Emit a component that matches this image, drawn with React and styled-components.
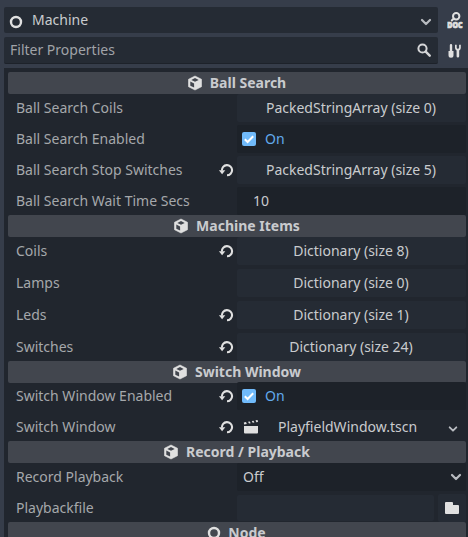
import React from "react";
import styled, { createGlobalStyle } from "styled-components";

const GlobalStyle = createGlobalStyle`
  * { box-sizing: border-box; }
  html, body { margin: 0; background: #363d4a; overflow: hidden; }
  body { font: 14px/20px "Noto Sans", sans-serif; color: #c9cbce; }
  svg { display: block; flex: none; }
`;

const Inspector = styled.div`
  display: flex;
  flex-direction: column;
  width: 468px;
  height: 537px;
  padding: 7px 0 0 4px;
  overflow: hidden;
  background: #363d4a;
`;

const ToolRow = styled.div`
  display: grid;
  flex: none;
  grid-template-columns: 434px 30px;
  height: ${(p) => p.$height}px;
  margin-bottom: 4px;
`;

const Field = styled.div`
  display: flex;
  align-items: center;
  justify-content: space-between;
  padding: 0 ${(p) => p.$end}px 0 ${(p) => p.$start}px;
  border-radius: 2px;
  background: #252b34;
  color: ${(p) => (p.$muted ? "#a0a3a8" : "#c9cbce")};
  border-bottom: ${(p) => (p.$muted ? "1px solid #1d222a" : "0")};

  > svg { margin-top: ${(p) => (p.$muted ? 0 : 3)}px; }
`;

const FieldLabel = styled.span`
  display: flex;
  align-items: center;
  gap: 9px;
  white-space: nowrap;

  > svg { margin-top: 3px; }
`;

const ToolButton = styled.div`
  display: flex;
  align-items: center;
  padding-left: 9px;
`;

const Panel = styled.div`
  flex: none;
  height: 480px;
  padding: 4px 2px 0 4px;
  background: #21262e;
`;

const SectionHeader = styled.div`
  display: flex;
  align-items: center;
  justify-content: center;
  gap: 7px;
  height: 22px;
  padding-right: 1px;
  border-radius: 2px;
  background: #42464e;
  font-weight: 700;
  white-space: nowrap;
`;

const Rows = styled.div`
  display: grid;
  grid-auto-rows: 28px;
  row-gap: ${(p) => p.$gap}px;
  margin-top: ${(p) => p.$shift || 0}px;
`;

const Row = styled.div`
  display: grid;
  grid-template-columns: 210px 19px 1fr;
  align-items: center;
`;

const Label = styled.div`
  padding-left: 8px;
  color: #a5a8ab;
  white-space: nowrap;
`;

const ValueBox = styled.div`
  display: flex;
  align-items: center;
  height: 28px;
  border-radius: 2px;
  white-space: nowrap;
  background: ${(p) => (p.$dark ? "#1d2229" : "#252b34")};
`;

const ButtonValue = styled(ValueBox)`
  justify-content: center;
  padding-right: 1px;
`;

const CheckValue = styled(ValueBox)`
  gap: 9px;
  padding-left: 5px;
  color: #62aaec;
`;

const NumberValue = styled(ValueBox)`
  padding-left: 16px;
`;

const SelectValue = styled(ValueBox)`
  justify-content: space-between;
  padding: 0 4px 0 6px;
`;

const ResourceValue = styled(ValueBox)`
  background: transparent;
  padding: 0 8px 0 6px;

  > svg:last-child { margin-top: 3px; }
`;

const ResourceName = styled.span`
  flex: 1;
  padding-left: 19px;
`;

const FileValue = styled.div`
  display: grid;
  grid-template-columns: 197px 28px;
  column-gap: 4px;
`;

const FileInput = styled(ValueBox)`
  height: 26px;
  align-self: center;
`;

const FileButton = styled(ValueBox)`
  justify-content: center;
`;

const NodeIcon = () => (
  <svg width="14" height="14" viewBox="0 0 14 14">
    <circle cx="7" cy="7" r="5" fill="none" stroke="#e0e0e0" strokeWidth="2.4" />
  </svg>
);

const CubeIcon = () => (
  <svg width="16" height="16" viewBox="0 0 16 16">
    <path d="M8 1 14.5 4.3V11.7L8 15 1.5 11.7V4.3Z" fill="#e0e0e0" strokeLinejoin="round" stroke="#e0e0e0" strokeWidth=".6" />
    <path d="M8 3 11.7 4.9 8 6.8 4.3 4.9Z" fill="#42464e" />
    <path d="M3.3 6.6 7.1 8.6V12.6L3.3 10.7Z" fill="#42464e" />
  </svg>
);

const Chevron = ({ size = 12 }) => (
  <svg width={size} height={size} viewBox="0 0 12 12">
    <path d="M2 4 6 8 10 4" fill="none" stroke="#b9bcc1" strokeWidth="2.2" strokeLinecap="round" strokeLinejoin="round" />
  </svg>
);

const SearchIcon = () => (
  <svg width="14" height="14" viewBox="0 0 14 14">
    <circle cx="5.5" cy="5.5" r="4.1" fill="none" stroke="#d5d6d8" strokeWidth="2" />
    <path d="M8.7 8.7 12.7 12.7" stroke="#d5d6d8" strokeWidth="2.4" strokeLinecap="round" />
  </svg>
);

const DocIcon = () => (
  <svg width="16" height="17" viewBox="0 0 16 17">
    <circle cx="9.2" cy="4.2" r="3.2" fill="none" stroke="#e0e0e0" strokeWidth="2" />
    <path d="M6.8 6.5 4.8 8.5" stroke="#e0e0e0" strokeWidth="2" strokeLinecap="round" />
    <text x="0.3" y="16.2" textLength="15.2" lengthAdjust="spacingAndGlyphs" fill="#e0e0e0" stroke="#e0e0e0" strokeWidth=".7" fontFamily="Noto Sans, sans-serif" fontSize="7.8" fontWeight="900">DOC</text>
  </svg>
);

const ToolsIcon = () => (
  <svg width="16" height="16" viewBox="0 0 16 16" fill="#e0e0e0">
    <path d="M2.8 2.2a1.2 1.2 0 0 1 2.4 0V8H6.5v4.2a2.5 2.5 0 0 1-5 0V8h1.3Z" />
    <path d="M8 1.8v3.1a3 3 0 0 0 1.6 2.5v5.8a1.2 1.2 0 0 0 2.6 0V7.4a3 3 0 0 0 1.6-2.5V1.8h-1.7v3.1l-1.2 1-1.2-1V1.8Z" />
  </svg>
);

const RevertIcon = () => (
  <svg width="17" height="16" viewBox="0 0 17 16">
    <path d="M3.9 8.6A5.1 5.1 0 1 1 9 13.3" fill="none" stroke="#e0e0e0" strokeWidth="2.1" />
    <path d="M.9 8.3H7.3L4.1 12.2Z" fill="#e0e0e0" />
  </svg>
);

const CheckIcon = () => (
  <svg width="14" height="14" viewBox="0 0 14 14">
    <rect width="14" height="14" rx="2" fill="#70bafa" />
    <path d="M2.8 7.2 5.6 10 11.2 4.2" fill="none" stroke="#fff" strokeWidth="2" />
  </svg>
);

const SceneIcon = () => (
  <svg width="16" height="16" viewBox="0 0 16 16" fill="#e0e0e0">
    <path d="M1 7h14v6.5a1 1 0 0 1-1 1H2a1 1 0 0 1-1-1Z" />
    <path d="M.8 3.6 3 3.1 3.8 5 1.2 5.6ZM5 2.7 6.8 2.4 7.7 4.2 6 4.6ZM8.8 2 10.5 1.7 11.4 3.5 9.7 3.8ZM12.5 1.3 14.6 1 15 2.9 13.3 3.2Z" />
  </svg>
);

const FolderIcon = () => (
  <svg width="14" height="12" viewBox="0 0 14 12" fill="#e0e0e0">
    <path d="M0 1a1 1 0 0 1 1-1H7a1 1 0 0 1 1 1V3H13a1 1 0 0 1 1 1V11a1 1 0 0 1-1 1H1a1 1 0 0 1-1-1Z" />
  </svg>
);

const Property = ({ name, changed, children }) => (
  <Row>
    <Label>{name}</Label>
    <div>{changed && <RevertIcon />}</div>
    {children}
  </Row>
);

const On = () => (
  <CheckValue $dark>
    <CheckIcon />
    On
  </CheckValue>
);

const items = [
  { name: "Coils", size: 8, changed: true },
  { name: "Lamps", size: 0 },
  { name: "Leds", size: 1, changed: true },
  { name: "Switches", size: 24, changed: true },
];

export default function App() {
  return (
    <>
      <GlobalStyle />
      <Inspector>
        <ToolRow $height={26}>
          <Field $start={5} $end={6}>
            <FieldLabel><NodeIcon />Machine</FieldLabel>
            <Chevron />
          </Field>
          <ToolButton><DocIcon /></ToolButton>
        </ToolRow>
        <ToolRow $height={27}>
          <Field $muted $start={6} $end={7}>
            <FieldLabel>Filter Properties</FieldLabel>
            <SearchIcon />
          </Field>
          <ToolButton><ToolsIcon /></ToolButton>
        </ToolRow>
        <Panel>
          <SectionHeader><CubeIcon />Ball Search</SectionHeader>
          <Rows $gap={3}>
            <Property name="Ball Search Coils">
              <ButtonValue>PackedStringArray (size 0)</ButtonValue>
            </Property>
            <Property name="Ball Search Enabled"><On /></Property>
            <Property name="Ball Search Stop Switches" changed>
              <ButtonValue>PackedStringArray (size 5)</ButtonValue>
            </Property>
            <Property name="Ball Search Wait Time Secs">
              <NumberValue $dark>10</NumberValue>
            </Property>
          </Rows>
          <SectionHeader><CubeIcon />Machine Items</SectionHeader>
          <Rows $gap={4}>
            {items.map((item) => (
              <Property key={item.name} name={item.name} changed={item.changed}>
                <ButtonValue>Dictionary (size {item.size})</ButtonValue>
              </Property>
            ))}
          </Rows>
          <SectionHeader><CubeIcon />Switch Window</SectionHeader>
          <Rows $gap={3} $shift={-1}>
            <Property name="Switch Window Enabled" changed><On /></Property>
            <Property name="Switch Window" changed>
              <ResourceValue>
                <SceneIcon />
                <ResourceName>PlayfieldWindow.tscn</ResourceName>
                <Chevron size={10} />
              </ResourceValue>
            </Property>
          </Rows>
          <SectionHeader><CubeIcon />Record / Playback</SectionHeader>
          <Rows $gap={3}>
            <Property name="Record Playback">
              <SelectValue $dark>Off<Chevron /></SelectValue>
            </Property>
            <Property name="Playbackfile">
              <FileValue>
                <FileInput />
                <FileButton><FolderIcon /></FileButton>
              </FileValue>
            </Property>
          </Rows>
          <SectionHeader><NodeIcon />Node</SectionHeader>
        </Panel>
      </Inspector>
    </>
  );
}
